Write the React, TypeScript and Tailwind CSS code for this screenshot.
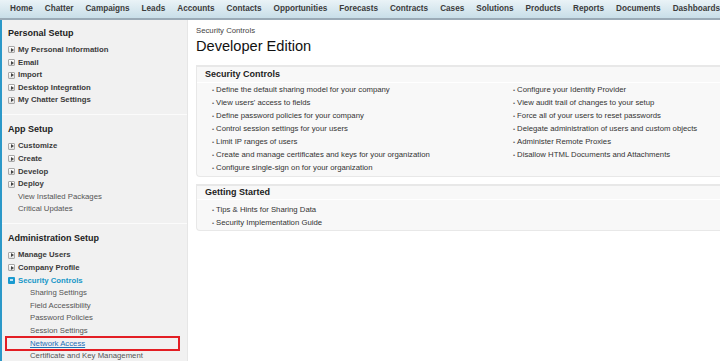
const tabs = [
  "Home", "Chatter", "Campaigns", "Leads", "Accounts", "Contacts", "Opportunities", "Forecasts",
  "Contracts", "Cases", "Solutions", "Products", "Reports", "Documents", "Dashboards",
];

type Item = { label: string; kind: "node" | "open" | "leaf" | "sub" | "active" };

const sections: { title: string; items: Item[] }[] = [
  {
    title: "Personal Setup",
    items: [
      { label: "My Personal Information", kind: "node" },
      { label: "Email", kind: "node" },
      { label: "Import", kind: "node" },
      { label: "Desktop Integration", kind: "node" },
      { label: "My Chatter Settings", kind: "node" },
    ],
  },
  {
    title: "App Setup",
    items: [
      { label: "Customize", kind: "node" },
      { label: "Create", kind: "node" },
      { label: "Develop", kind: "node" },
      { label: "Deploy", kind: "node" },
      { label: "View Installed Packages", kind: "leaf" },
      { label: "Critical Updates", kind: "leaf" },
    ],
  },
  {
    title: "Administration Setup",
    items: [
      { label: "Manage Users", kind: "node" },
      { label: "Company Profile", kind: "node" },
      { label: "Security Controls", kind: "open" },
      { label: "Sharing Settings", kind: "sub" },
      { label: "Field Accessibility", kind: "sub" },
      { label: "Password Policies", kind: "sub" },
      { label: "Session Settings", kind: "sub" },
      { label: "Network Access", kind: "active" },
      { label: "Certificate and Key Management", kind: "sub" },
    ],
  },
];

const leftLinks = [
  "Define the default sharing model for your company",
  "View users' access to fields",
  "Define password policies for your company",
  "Control session settings for your users",
  "Limit IP ranges of users",
  "Create and manage certificates and keys for your organization",
  "Configure single-sign on for your organization",
];

const rightLinks = [
  "Configure your Identity Provider",
  "View audit trail of changes to your setup",
  "Force all of your users to reset passwords",
  "Delegate administration of users and custom objects",
  "Administer Remote Proxies",
  "Disallow HTML Documents and Attachments",
];

const NodeIcon = () => (
  <span className="w-[7px] h-[7px] border border-[#a8a8a8] rounded-[1px] bg-gradient-to-b from-white to-[#e2e2e2] flex items-center justify-center">
    <span className="w-0 h-0 border-l-[3px] border-l-[#444] border-y-[2px] border-y-transparent ml-px" />
  </span>
);

const OpenIcon = () => (
  <span className="w-[7px] h-[7px] bg-[#1a9ad0] rounded-[1px] flex items-center justify-center">
    <span className="w-[3px] h-[2px] bg-[#bfe4f5]" />
  </span>
);

const SideItem = ({ item }: { item: Item }) => {
  if (item.kind === "node" || item.kind === "open") {
    return (
      <div className="h-[12.6px] flex items-center pl-[6px] gap-[3px]">
        {item.kind === "node" ? <NodeIcon /> : <OpenIcon />}
        <span className={item.kind === "open" ? "font-bold text-[#1797c8]" : "font-bold text-[#3a3a3a]"}>{item.label}</span>
      </div>
    );
  }
  if (item.kind === "leaf") {
    return <div className="h-[12.6px] flex items-center pl-[16px] text-[#555]">{item.label}</div>;
  }
  if (item.kind === "active") {
    return (
      <div className="relative h-[12.6px] flex items-center pl-[28px]">
        <span className="text-[#1d6fb8] underline">{item.label}</span>
        <div className="absolute left-[3px] top-[-1px] w-[175px] h-[14.5px] border-2 border-[#e31e24]" />
      </div>
    );
  }
  return <div className="h-[12.6px] flex items-center pl-[28px] text-[#555]">{item.label}</div>;
};

const LinkRow = ({ text }: { text: string }) => (
  <div className="h-[13px] flex items-center gap-[2px] text-[#333]">
    <span className="text-[6px] text-[#666]">•</span>
    <span>{text}</span>
  </div>
);

export default function App() {
  return (
    <div className="w-[720px] h-[361px] overflow-hidden bg-white text-[7.75px] leading-none" style={{ fontFamily: '"Liberation Sans", Arial, sans-serif' }}>
      <div className="h-[20px] flex items-center gap-[12px] pl-[10px] bg-gradient-to-b from-[#eaf3f7] to-[#c8dee8] border-b-2 border-[#9aaab6] text-[8.2px] font-bold text-[#3b3b3b] whitespace-nowrap">
        {tabs.map((t) => (
          <span key={t}>{t}</span>
        ))}
      </div>
      <div className="flex h-[341px]">
        <div className="w-[188px] shrink-0 bg-[#f1f1f1] border-l-2 border-[#2b98c8] border-r border-r-[#e6e6e6]">
          {sections.map((s, i) => (
            <div key={s.title} className={i === 0 ? "pt-[7px] pb-[7px] border-b border-[#fbfbfb]" : "pt-[8.7px] pb-[7px] border-b border-[#fbfbfb]"}>
              <div className="h-[12px] flex items-center pl-[6px] text-[9px] font-bold text-[#222]">{s.title}</div>
              <div className="mt-[4.7px]">
                {s.items.map((it) => (
                  <SideItem key={it.label} item={it} />
                ))}
              </div>
            </div>
          ))}
        </div>
        <div className="flex-1 pl-[8px] pt-[6.5px]">
          <div className="h-[9px] flex items-center text-[7.75px] text-[#444]">Security Controls</div>
          <div className="h-[16px] mt-[3px] flex items-center text-[14.6px] text-[#111]">Developer Edition</div>
          <div className="mt-[10px] bg-[#f8f8f8] border-t-2 border-[#56667e] border-l border-b border-[#e8e8e8] rounded-bl-[4px]">
            <div className="h-[16px] flex items-center pl-[8px] text-[9px] font-bold text-[#222] border-b border-white">Security Controls</div>
            <div className="flex pl-[15px] pt-[1px] pb-[1px]">
              <div className="w-[301px]">
                {leftLinks.map((l) => (
                  <LinkRow key={l} text={l} />
                ))}
              </div>
              <div>
                {rightLinks.map((l) => (
                  <LinkRow key={l} text={l} />
                ))}
              </div>
            </div>
          </div>
          <div className="mt-[7.5px] bg-[#f8f8f8] border-t-2 border-[#8d3a12] border-l border-b border-[#e8e8e8] rounded-bl-[4px]">
            <div className="h-[14px] flex items-center pl-[8px] text-[9px] font-bold text-[#222] border-b border-white">Getting Started</div>
            <div className="pl-[15px] pt-[3px] pb-[1px]">
              <LinkRow text="Tips & Hints for Sharing Data" />
              <LinkRow text="Security Implementation Guide" />
            </div>
          </div>
        </div>
      </div>
    </div>
  );
}
